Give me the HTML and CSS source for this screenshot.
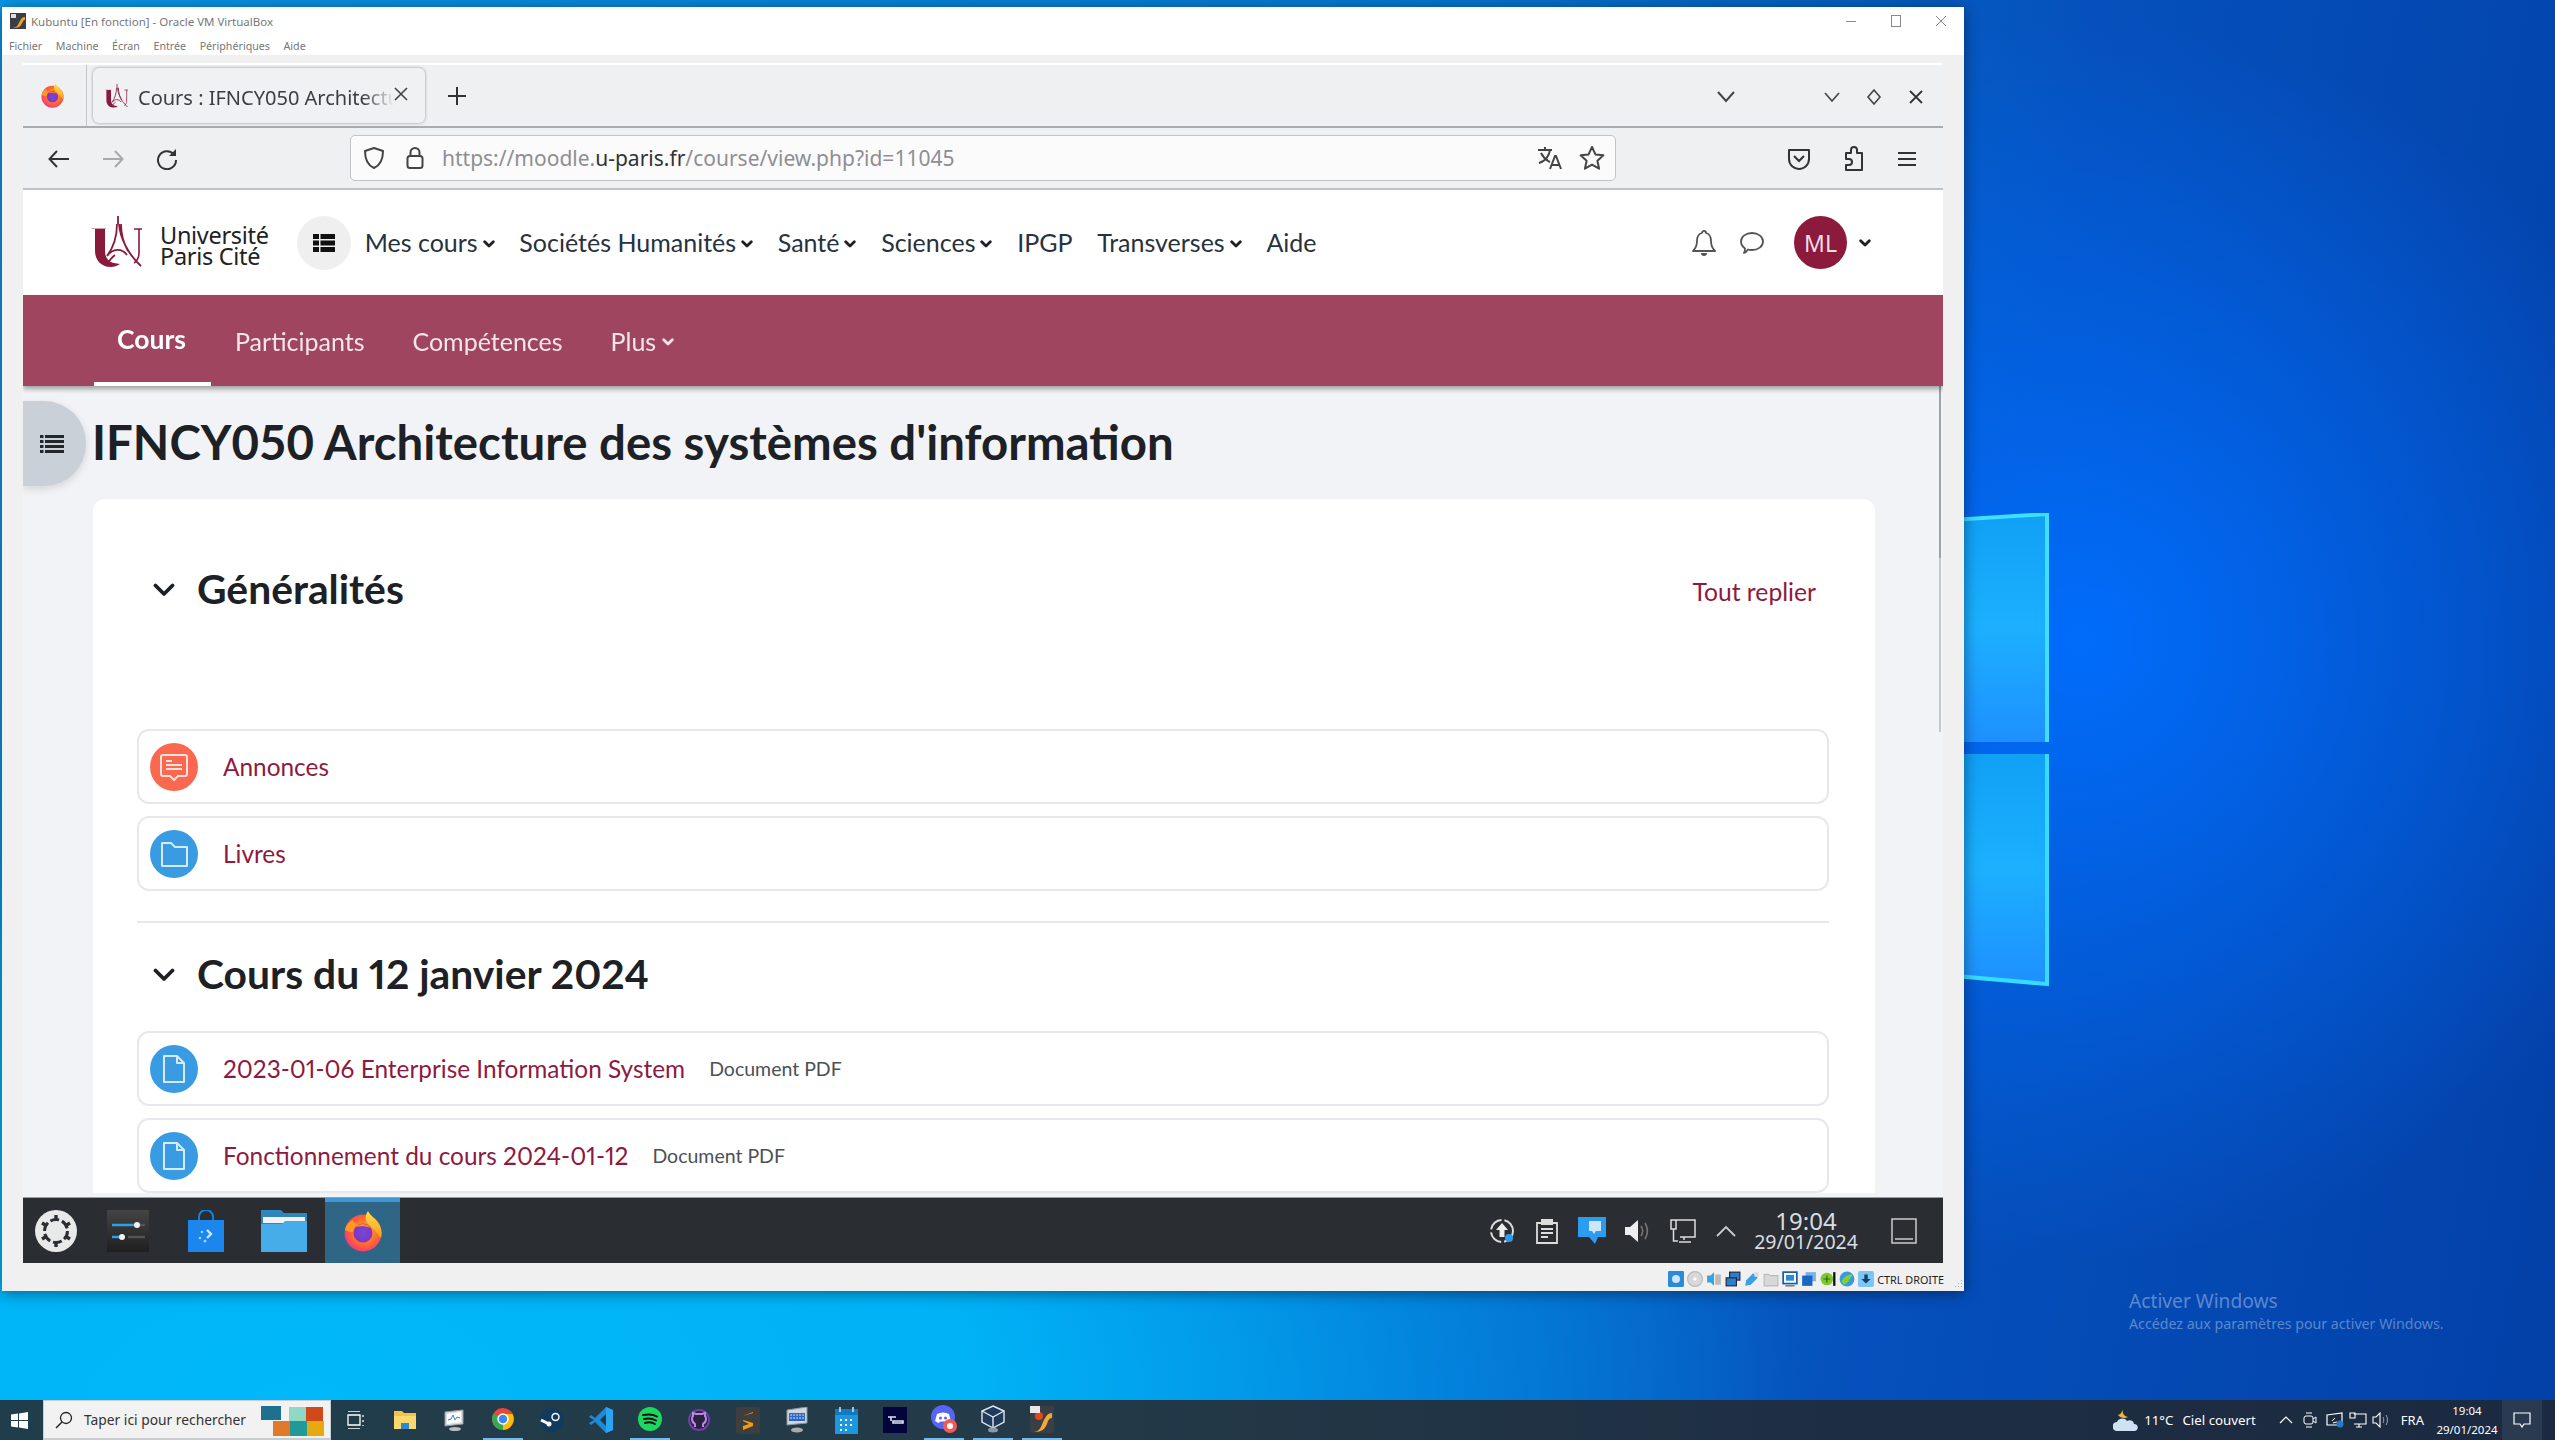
FILE: index.html
```html
<!DOCTYPE html>
<html lang="fr">
<head>
<meta charset="utf-8">
<title>Kubuntu - Oracle VM VirtualBox</title>
<link rel="stylesheet" href="styles.css">
</head>
<body>
<svg class="defs" width="0" height="0">
  <defs>
    <radialGradient id="fxBody" cx="55%" cy="45%" r="60%"><stop offset="0" stop-color="#ffb52e"/><stop offset=".6" stop-color="#ff6a2b"/><stop offset="1" stop-color="#f0318a"/></radialGradient>
    <linearGradient id="fxTop" x1="0" y1="0" x2="0" y2="1"><stop offset="0" stop-color="#ffe23f"/><stop offset="1" stop-color="#ff9a1f"/></linearGradient>
    <radialGradient id="fxCore" cx="50%" cy="50%" r="55%"><stop offset="0" stop-color="#6d4bd8"/><stop offset="1" stop-color="#8a2fc0"/></radialGradient>
    <symbol id="firefox" viewBox="0 0 42 42">
      <circle cx="21" cy="23" r="18.5" fill="url(#fxBody)"/>
      <path d="M26 1c2 5 8 7 11 13 3 5 3 10 2 14-3-3-5-7-8-9-3-3-6-5-7-9-1-3 0-6 2-9z" fill="url(#fxTop)"/>
      <path d="M3 20c1-5 4-8 8-10 0 3 2 4 5 4-3 2-5 5-5 8-3 0-6-1-8-2z" fill="#ff9b24"/>
      <circle cx="21" cy="23" r="9.5" fill="url(#fxCore)"/>
      <path d="M13 17c4-4 12-4 16 1-5-2-11-2-16-1z" fill="#ff8a1f"/>
    </symbol>
    <symbol id="upc" viewBox="0 0 52 52">
      <path d="M0 12.5h14" stroke="#c9a0ae" stroke-width="1" fill="none"/>
      <path d="M3 13h10v22c0 7 4 11 9 12l6 1c-3 2-6 3-9 3C9 51 3 44 3 35z" fill="#8a1a3c"/>
      <path d="M42 13h8M47 13v24c0 4-2 8-5 10" stroke="#8a1a3c" stroke-width="1.6" fill="none"/>
      <path d="M26 0v8M25 8c0 12-4 24-10 32M27 8c1 14 9 30 22 42M15 40c6-8 15-8 20-1M14 50c3-5 6-9 9-11M29 8c0 10 3 20 7 27" stroke="#8a1a3c" stroke-width="1.8" fill="none"/>
    </symbol>
    <symbol id="doc" viewBox="0 0 48 48">
      <circle cx="24" cy="24" r="24" fill="#399be2"/>
      <path d="M14 11h13l7 7v19H14z M27 11v7h7" fill="none" stroke="#d6eafa" stroke-width="2" stroke-linejoin="round"/>
    </symbol>
    <symbol id="caret" viewBox="0 0 12 8"><path d="M1.700 1.700 6 6l4.300-4.300" fill="none" stroke="currentColor" stroke-width="2.800" stroke-linecap="round" stroke-linejoin="round"/></symbol>
  </defs>
</svg>

<div class="desktop">
  <div class="wallpaper-area">
    <svg class="winlogo" viewBox="0 0 600 520" width="600" height="520">
      <defs><linearGradient id="pane" x1="0" y1="0" x2="0" y2="1"><stop offset="0" stop-color="#10a0f5"/><stop offset=".5" stop-color="#1cb0ff"/><stop offset="1" stop-color="#1e90ff"/></linearGradient></defs>
      <path d="M0 41 586 0v229H0z" fill="url(#pane)"/>
      <path d="M0 241h586v230L0 420z" fill="url(#pane)"/>
      <path d="M0 38 586 1v228" fill="none" stroke="#3fe0ff" stroke-width="4"/>
      <path d="M586 241v230L0 420" fill="none" stroke="#35dcff" stroke-width="4"/>
    </svg>

    <div class="activate">
      <div class="activate-title">Activer Windows</div>
      <div class="activate-sub">Accédez aux paramètres pour activer Windows.</div>
    </div>

    <div class="vbox">
      <div class="vb-title">
        <svg class="vb-appicon" viewBox="0 0 16 16"><rect width="16" height="16" fill="#3b3f45"/><path d="M3 15c5-1 5-4 7-7 1-2 2-4 5-4v3c-2 0-2 2-4 5-1 2-3 3-8 3z" fill="#f0a030"/><rect x="1" y="1" width="5" height="4" fill="#ddd"/></svg>
        <span class="vb-name">Kubuntu [En fonction] - Oracle VM VirtualBox</span>
        <div class="vb-controls">
          <svg viewBox="0 0 12 12" width="12" height="12"><path d="M1 6.500h10" stroke="#888" fill="none"/></svg>
          <svg viewBox="0 0 12 12" width="12" height="12"><rect x="1.500" y=".5" width="9" height="11" stroke="#888" fill="none"/></svg>
          <svg viewBox="0 0 12 12" width="12" height="12"><path d="M1 1l10 10M11 1 1 11" stroke="#888" fill="none"/></svg>
        </div>
      </div>
      <div class="vb-menu"><span>Fichier</span><span>Machine</span><span>Écran</span><span>Entrée</span><span>Périphériques</span><span>Aide</span></div>

      <div class="vb-frame">
        <div class="guest">
          <div class="tabbar">
            <div class="fx-menu"><svg width="25" height="25"><use href="#firefox"/></svg></div>
            <div class="tab">
              <svg class="tab-fav" width="24" height="24"><use href="#upc"/></svg>
              <span class="tab-title">Cours : IFNCY050 Architecture des systèmes</span>
              <svg class="tab-x" viewBox="0 0 14 14" width="14" height="14"><path d="M1 1l12 12M13 1 1 13" stroke="#444" stroke-width="1.600" fill="none"/></svg>
            </div>
            <svg class="newtab" viewBox="0 0 18 18" width="18" height="18"><path d="M9 0v18M0 9h18" stroke="#333" stroke-width="2" fill="none"/></svg>
            <div class="tab-tools">
              <svg class="tt-list" viewBox="0 0 18 12" width="18" height="12"><path d="M1 1l8 9 8-9" stroke="#444" stroke-width="2" fill="none"/></svg>
              <svg class="tt-min" viewBox="0 0 16 10" width="16" height="10"><path d="M1 1l7 8 7-8" stroke="#444" stroke-width="1.600" fill="none"/></svg>
              <svg class="tt-max" viewBox="0 0 16 16" width="16" height="16"><path d="M8 1l6 7-6 7-6-7z" stroke="#444" stroke-width="1.600" fill="none"/></svg>
              <svg class="tt-close" viewBox="0 0 14 14" width="14" height="14"><path d="M1 1l12 12M13 1 1 13" stroke="#333" stroke-width="1.800" fill="none"/></svg>
            </div>
          </div>

          <div class="toolbar">
            <svg class="tb-back" viewBox="0 0 22 18" width="22" height="18"><path d="M21 9H2M9 1 1.500 9 9 17" stroke="#333" stroke-width="2" fill="none"/></svg>
            <svg class="tb-fwd" viewBox="0 0 22 18" width="22" height="18"><path d="M1 9h19M13 1l7.500 8-7.500 8" stroke="#aaa" stroke-width="2" fill="none"/></svg>
            <svg class="tb-reload" viewBox="0 0 22 22" width="22" height="22"><path d="M18 6.500A9 9 0 1 0 20 12" stroke="#333" stroke-width="2" fill="none"/><path d="M20 1v7h-7z" fill="#333"/></svg>
            <div class="urlbar">
              <svg class="u-shield" viewBox="0 0 22 24" width="22" height="24"><path d="M11 2l9 3c0 8-2 14-9 17C4 19 2 13 2 5z" stroke="#444" stroke-width="2" fill="none" stroke-linejoin="round"/></svg>
              <svg class="u-lock" viewBox="0 0 18 24" width="18" height="24"><rect x="1.500" y="10" width="15" height="12" rx="2.500" stroke="#444" stroke-width="2" fill="none"/><path d="M4.500 10V6.500a4.500 4.500 0 0 1 9 0V10" stroke="#444" stroke-width="2" fill="none"/></svg>
              <span class="u-text">https://moodle.<b>u-paris.fr</b>/course/view.php?id=11045</span>
              <svg class="u-trans" viewBox="0 0 26 24" width="26" height="24"><path d="M1 4h14M8 1v3M13 4c-1 6-5 11-11 13M4 7c2 4 5 7 9 9" stroke="#444" stroke-width="2" fill="none"/><path d="M13 23l5-13h1l5 13M15 19h8" stroke="#444" stroke-width="2" fill="none"/></svg>
              <svg class="u-star" viewBox="0 0 26 26" width="26" height="26"><path d="M13 2l3.400 7.400 8 .9-6 5.400 1.700 8L13 19.700 5.900 23.700l1.700-8-6-5.400 8-.9z" stroke="#444" stroke-width="2" fill="none" stroke-linejoin="round"/></svg>
            </div>
            <svg class="tb-pocket" viewBox="0 0 24 24" width="24" height="24"><path d="M2 3h20v9c0 6-5 10-10 10S2 18 2 12z" stroke="#333" stroke-width="2" fill="none" stroke-linejoin="round"/><path d="M7 9l5 5 5-5" stroke="#333" stroke-width="2" fill="none"/></svg>
            <svg class="tb-puzzle" viewBox="0 0 22 26" width="22" height="26"><path d="M3 7h5V4a3 3 0 0 1 6 0v3h5v17H3v-5h3a3 3 0 0 0 0-6H3z" stroke="#333" stroke-width="2" fill="none" stroke-linejoin="round"/></svg>
            <svg class="tb-menu" viewBox="0 0 20 16" width="20" height="16"><path d="M1 2h18M1 8h18M1 14h18" stroke="#333" stroke-width="2" fill="none"/></svg>
          </div>

          <header class="site-head">
            <svg class="upc-mark" width="52" height="52"><use href="#upc"/></svg>
            <div class="upc-name"><span>Université</span><span>Paris Cité</span></div>
            <div class="apps-btn"><svg viewBox="0 0 22 18" width="22" height="18"><path d="M0 0h6v5H0zM7.500 0H22v5H7.500zM0 6.500h6v5H0zM7.500 6.500H22v5H7.500zM0 13h6v5H0zM7.500 13H22v5H7.500z" fill="#111"/></svg></div>
            <nav class="site-nav">
              <a class="nav-item">Mes cours <svg width="12" height="8"><use href="#caret"/></svg></a>
              <a class="nav-item">Sociétés Humanités <svg width="12" height="8"><use href="#caret"/></svg></a>
              <a class="nav-item">Santé <svg width="12" height="8"><use href="#caret"/></svg></a>
              <a class="nav-item">Sciences <svg width="12" height="8"><use href="#caret"/></svg></a>
              <a class="nav-item">IPGP</a>
              <a class="nav-item">Transverses <svg width="12" height="8"><use href="#caret"/></svg></a>
              <a class="nav-item">Aide</a>
            </nav>
            <div class="user-tools">
              <svg class="ut-bell" viewBox="0 0 24 26" width="24" height="26"><path d="M12 1c1 0 2 1 2 2 4 1 5 4 5 8 0 5 1 7 4 10H1c3-3 4-5 4-10 0-4 1-7 5-8 0-1 1-2 2-2z" stroke="#555" stroke-width="1.800" fill="none" stroke-linejoin="round"/><path d="M9 23a3 3 0 0 0 6 0z" fill="#555"/></svg>
              <svg class="ut-chat" viewBox="0 0 26 24" width="26" height="24"><path d="M13 2c6 0 11 3.500 11 8.500S19 19 13 19c-2 0-3 0-4-.5-1 1.500-2 3-4 3.500 1-1.500 1-3 1-4.500-2-1.500-4-4-4-7C2 5.500 7 2 13 2z" stroke="#555" stroke-width="1.800" fill="none" stroke-linejoin="round"/></svg>
              <div class="avatar">ML</div>
              <svg class="ut-caret" width="12" height="8"><use href="#caret"/></svg>
            </div>
          </header>

          <div class="sec-nav">
            <a class="sec-item active">Cours</a>
            <a class="sec-item">Participants</a>
            <a class="sec-item">Compétences</a>
            <a class="sec-item">Plus <svg width="12" height="8"><use href="#caret"/></svg></a>
          </div>

          <main class="page">
            <div class="drawer-btn"><svg viewBox="0 0 24 20" width="24" height="20"><path d="M0 1h3.500v3H0zM5 1h19v3H5zM0 6h3.500v3H0zM5 6h19v3H5zM0 11h3.500v3H0zM5 11h19v3H5zM0 16h3.500v3H0zM5 16h19v3H5z" fill="#23272b"/></svg></div>
            <div class="scroll-a"></div>
            <div class="scroll-b"></div>
            <h1 class="course-title">IFNCY050 Architecture des systèmes d'information</h1>
            <section class="card">
              <div class="sec-head first">
                <svg class="sec-caret" viewBox="0 0 22 14" width="22" height="14"><path d="M2.500 2.500 11 11l8.500-8.500" stroke="#1d2125" stroke-width="3.800" fill="none" stroke-linecap="round" stroke-linejoin="round"/></svg>
                <h2>Généralités</h2>
                <a class="collapse-all">Tout replier</a>
              </div>
              <div class="activity">
                <svg class="act-icon" viewBox="0 0 48 48" width="48" height="48"><circle cx="24" cy="24" r="24" fill="#fb6850"/><path d="M13 12h22a2 2 0 0 1 2 2v17a2 2 0 0 1-2 2h-7l-4 4-4-4h-7a2 2 0 0 1-2-2V14a2 2 0 0 1 2-2z" fill="none" stroke="#fde3dc" stroke-width="2"/><path d="M16 18h6M16 22h16M16 26h16" stroke="#fde3dc" stroke-width="2"/></svg>
                <a class="act-link">Annonces</a>
              </div>
              <div class="activity">
                <svg class="act-icon" viewBox="0 0 48 48" width="48" height="48"><circle cx="24" cy="24" r="24" fill="#399be2"/><path d="M12 13h9l4 4h12v19H12z" fill="none" stroke="#d6eafa" stroke-width="2" stroke-linejoin="round"/></svg>
                <a class="act-link">Livres</a>
              </div>
              <hr class="divider">
              <div class="sec-head">
                <svg class="sec-caret" viewBox="0 0 22 14" width="22" height="14"><path d="M2.500 2.500 11 11l8.500-8.500" stroke="#1d2125" stroke-width="3.800" fill="none" stroke-linecap="round" stroke-linejoin="round"/></svg>
                <h2>Cours du 12 janvier 2024</h2>
              </div>
              <div class="activity">
                <svg class="act-icon" width="48" height="48"><use href="#doc"/></svg>
                <a class="act-link">2023-01-06 Enterprise Information System</a>
                <span class="act-type">Document PDF</span>
              </div>
              <div class="activity">
                <svg class="act-icon" width="48" height="48"><use href="#doc"/></svg>
                <a class="act-link">Fonctionnement du cours 2024-01-12</a>
                <span class="act-type">Document PDF</span>
              </div>
            </section>
          </main>

          <div class="dock">
            <div class="dock-slot s-k">
              <svg viewBox="0 0 42 42" width="42" height="42"><circle cx="21" cy="21" r="21" fill="#e9e9e9"/><circle cx="21" cy="21" r="11.500" fill="none" stroke="#2a2e32" stroke-width="3" stroke-dasharray="9 3"/><path d="M21 5v5M21 32v5M7 13l5 3M30 26l5 3M7 29l5-3M30 16l5-3" stroke="#2a2e32" stroke-width="3.400"/></svg>
            </div>
            <div class="dock-slot s-s">
              <svg viewBox="0 0 42 42" width="42" height="42"><defs><linearGradient id="setbg" x1="0" y1="0" x2="0" y2="1"><stop offset="0" stop-color="#444"/><stop offset="1" stop-color="#1f1f1f"/></linearGradient></defs><rect width="42" height="42" fill="url(#setbg)"/><path d="M5 15h24" stroke="#2aa1ef" stroke-width="2.500"/><path d="M30 15h8M21 27h17" stroke="#555" stroke-width="2.500"/><path d="M5 27h10" stroke="#2aa1ef" stroke-width="2.500"/><circle cx="30" cy="15" r="3" fill="#f2f2f2"/><circle cx="15" cy="27" r="3" fill="#f2f2f2"/></svg>
            </div>
            <div class="dock-slot s-b">
              <svg viewBox="0 0 36 42" width="36" height="42"><path d="M11 11V7a7 7 0 0 1 14 0v4" fill="none" stroke="#1c7fc9" stroke-width="2"/><path d="M0 10h36v32H0z" fill="#1a86ee"/><path d="M19 20l4 4-4 4" stroke="#cfe8ff" stroke-width="2.400" fill="none"/><circle cx="14" cy="22" r="1.300" fill="#9ed0fa"/><circle cx="12" cy="28" r="1.300" fill="#9ed0fa"/><circle cx="17" cy="31" r="1.500" fill="#9ed0fa"/></svg>
            </div>
            <div class="dock-slot s-f">
              <svg viewBox="0 0 46 42" width="46" height="42"><path d="M0 0h20l3 3h23v39H0z" fill="#2f86bd"/><rect x="2" y="7" width="42" height="6" fill="#f3f3f3"/><path d="M0 14h21l3-3h22v31H0z" fill="#46ade8"/></svg>
            </div>
            <div class="dock-slot s-fx"><svg width="42" height="44"><use href="#firefox"/></svg></div>
            <div class="dock-tray">
              <svg class="dt dt1" viewBox="0 0 26 26" width="26" height="26"><circle cx="13" cy="13" r="11" fill="none" stroke="#ddd" stroke-width="2" stroke-dasharray="15 3"/><path d="M13 5l6 7h-3.500v7h-5v-7H7z" fill="#eee"/><circle cx="20" cy="20" r="4" fill="#2b9cf0"/></svg>
              <svg class="dt dt2" viewBox="0 0 22 26" width="22" height="26"><path d="M1 5h20v20H1z" fill="none" stroke="#ddd" stroke-width="1.800"/><rect x="5" y="1" width="12" height="6" fill="#ddd"/><path d="M5 11h12M5 15h12M5 19h7" stroke="#ddd" stroke-width="1.800"/></svg>
              <svg class="dt dt3" viewBox="0 0 28 28" width="28" height="28"><path d="M0 0h28v20h-8l-3 7-6-7H0z" fill="#2b9cf0"/><path d="M11 4h12v10h-5l-2 3-2-3h-3z" fill="#cfe6f8"/></svg>
              <svg class="dt dt4" viewBox="0 0 26 26" width="26" height="26"><path d="M1 9h5l8-7v22l-8-7H1z" fill="#eee"/><path d="M17 8c2 3 2 7 0 10M21 5c3 5 3 11 0 16" stroke="#777" stroke-width="1.500" fill="none"/></svg>
              <svg class="dt dt5" viewBox="0 0 26 26" width="26" height="26"><path d="M6 2h19v17H10M14 19v3M9 24h12M1 2h5v9H1zM3.500 11v12H8" fill="none" stroke="#ddd" stroke-width="1.500"/></svg>
              <svg class="dt dt6" viewBox="0 0 20 12" width="20" height="12"><path d="M1 11l9-9 9 9" fill="none" stroke="#ccc" stroke-width="1.800"/></svg>
              <div class="dock-clock"><div class="dc-t">19:04</div><div class="dc-d">29/01/2024</div></div>
              <svg class="dt dt7" viewBox="0 0 26 26" width="26" height="26"><path d="M1 1h24v24H1zM4 21h18" fill="none" stroke="#ccc" stroke-width="1.500"/></svg>
            </div>
          </div>
        </div>
      </div>

      <div class="vb-status">
        <svg viewBox="0 0 14 14"><rect width="14" height="14" rx="1" fill="#2a8cd8"/><circle cx="7" cy="7" r="3.500" fill="#cfe6f8"/></svg>
        <svg viewBox="0 0 14 14"><circle cx="7" cy="7" r="6.500" fill="#d8d8d8" stroke="#bbb"/><circle cx="7" cy="7" r="1.500" fill="#fff"/></svg>
        <svg viewBox="0 0 14 14"><path d="M1 4h3l3-3v12l-3-3H1z" fill="#3aa0e0"/><rect x="8" y="3" width="5" height="9" fill="#bbb"/></svg>
        <svg viewBox="0 0 14 14"><rect x="4" y="1" width="9" height="7" fill="#2a7fc8" stroke="#224"/><rect x="1" y="6" width="9" height="7" fill="#2a7fc8" stroke="#224"/></svg>
        <svg viewBox="0 0 14 14"><path d="M1 13l1-5 6-6 4 4-6 6z" fill="#3aa0e0"/><rect x="9" y="1" width="4" height="4" fill="#ddd"/></svg>
        <svg viewBox="0 0 14 14"><path d="M1 3h4l1 1h7v9H1z" fill="#d8d8d8" stroke="#bbb"/></svg>
        <svg viewBox="0 0 14 14"><rect x="1" y="1" width="12" height="10" fill="#fff" stroke="#1a5fa8" stroke-width="1.500"/><rect x="3.500" y="3.500" width="7" height="5" fill="#2a8cd8"/><path d="M3 13h8" stroke="#555"/></svg>
        <svg viewBox="0 0 14 14"><rect x="4" y="1" width="9" height="8" fill="#7db0e8"/><rect x="1" y="4" width="9" height="9" fill="#1a66c4"/></svg>
        <svg viewBox="0 0 14 14"><circle cx="6" cy="7" r="5.500" fill="#7fc832"/><path d="M3 7h6M6 4v6" stroke="#2c6a10"/><rect x="11.500" y="1" width="2" height="12" fill="#111"/></svg>
        <svg viewBox="0 0 14 14"><circle cx="7" cy="7" r="6.500" fill="#3a9ae0"/><path d="M2 9c3-5 6-6 10-6-2 3-4 8-8 9z" fill="#7fcf3a"/></svg>
        <svg viewBox="0 0 14 14"><rect width="14" height="14" rx="1.500" fill="#7cc6f5"/><path d="M5.500 3h3v4h2.500L7 11 3 7h2.500z" fill="#10406e"/></svg>
        <span class="vb-ctrl">CTRL DROITE</span>
        <svg class="vb-grip" viewBox="0 0 10 10"><path d="M8 2h1v1H8zM5 5h1v1H5zM8 5h1v1H8zM2 8h1v1H2zM5 8h1v1H5zM8 8h1v1H8z" fill="#aaa"/></svg>
      </div>
    </div>
  </div>

  <div class="taskbar">
    <div class="start"><svg viewBox="0 0 17 17" width="17" height="17"><path d="M0 2.500 7 1.500v6.500H0zM8 1.400 17 0v8H8zM0 9h7v6.500l-7-1zM8 9h9v8l-9-1.400z" fill="#fff"/></svg></div>
    <div class="search">
      <svg class="s-glass" viewBox="0 0 18 18" width="18" height="18"><circle cx="11" cy="7" r="5.500" fill="none" stroke="#222" stroke-width="1.300"/><path d="M7 11l-6 6" stroke="#222" stroke-width="1.400"/></svg>
      <span>Taper ici pour rechercher</span>
      <div class="puzzle"><i class="p1"></i><i class="p2"></i><i class="p3"></i><i class="p4"></i><i class="p5"></i><i class="p6"></i></div>
    </div>
    <div class="tb-apps">
      <div class="tb-slot"><svg viewBox="0 0 18 18" width="18" height="18"><path d="M1 0h12M1 18h12M1 4h12v10H1zM16 4v2M16 9v2M16 14v1" stroke="#fff" stroke-width="1.300" fill="none"/></svg></div>
      <div class="tb-slot"><svg viewBox="0 0 22 20" width="22" height="20"><path d="M0 1h8l2 2h12v16H0z" fill="#f3c44a"/><path d="M0 6h22v13H0z" fill="#fada6e"/><path d="M7 13h8v6H7z" fill="#2f87d0"/></svg></div>
      <div class="tb-slot"><svg viewBox="0 0 22 22" width="22" height="22"><path d="M2 3l18-2v14L2 17z" fill="#d8dde2" stroke="#999"/><path d="M4 5l14-2v10L4 15z" fill="#fff"/><path d="M5 11l3-1 2-4 2 5 2-3 3 1" stroke="#2f87d0" fill="none"/><ellipse cx="12" cy="20" rx="6" ry="2" fill="#bbb"/></svg></div>
      <div class="tb-slot on"><svg viewBox="0 0 22 22" width="22" height="22"><circle cx="11" cy="11" r="11" fill="#e8453c"/><path d="M11 11 1.500 5.500A11 11 0 0 0 11 22z" fill="#34a853"/><path d="M11 6h9.500A11 11 0 0 1 11 22z" fill="#fbbc05"/><circle cx="11" cy="11" r="5" fill="#4285f4" stroke="#fff" stroke-width="1.500"/></svg></div>
      <div class="tb-slot"><svg viewBox="0 0 24 24" width="24" height="24"><circle cx="12" cy="12" r="12" fill="#123a5c"/><circle cx="15.500" cy="9" r="3.500" fill="none" stroke="#fff" stroke-width="1.400"/><path d="M1 12l8 4" stroke="#fff" stroke-width="3"/><circle cx="9" cy="16" r="2.500" fill="#fff"/></svg></div>
      <div class="tb-slot"><svg viewBox="0 0 24 26" width="24" height="26"><path d="M17 0l7 3v20l-7 3L6 15l-4 3-2-2 5-3-5-3 2-2 4 3z" fill="#1d8ad6"/><path d="M17 0l7 3v20l-7 3z" fill="#2aa5f0"/><path d="M17 7l-6 6 6 6z" fill="#243744"/></svg></div>
      <div class="tb-slot on"><svg viewBox="0 0 24 24" width="24" height="24"><circle cx="12" cy="12" r="12" fill="#1ed760"/><path d="M5 8c5-1 10-1 14 1.500M6 12c4-1 8-1 12 1.500M7 16c3-1 7-1 10 1" stroke="#111" stroke-width="2" fill="none" stroke-linecap="round"/></svg></div>
      <div class="tb-slot"><svg viewBox="0 0 22 24" width="22" height="24"><circle cx="11" cy="12" r="10" fill="#2b2140" stroke="#6f3fa5" stroke-width="2"/><path d="M7 19v-3c-2-1-3-3-3-5 0-1 0-2 1-3V5l3 1h6l3-1v3c1 1 1 2 1 3 0 2-1 4-3 5v3" fill="none" stroke="#b48ae0" stroke-width="2"/></svg></div>
      <div class="tb-slot"><svg viewBox="0 0 24 27" width="24" height="27"><rect width="24" height="27" rx="2" fill="#3e3e3e"/><path d="M17 5 7 9v4l10 3v3L7 23v-4l6-2-6-3V9l10-3z" fill="#f59b10"/></svg></div>
      <div class="tb-slot"><svg viewBox="0 0 24 26" width="24" height="26"><path d="M2 3 22 0v16L2 18z" fill="#d0d7de" stroke="#8a949e"/><path d="M4 6h16v8H4z" fill="#2d66c4"/><path d="M5 8h14M5 11h14" stroke="#cfe0fa" stroke-dasharray="2 1"/><ellipse cx="12" cy="23" rx="6" ry="2.500" fill="#aaa"/></svg></div>
      <div class="tb-slot"><svg viewBox="0 0 23 27" width="23" height="27"><rect y="2" width="23" height="25" fill="#1b98e0"/><rect y="2" width="23" height="6" fill="#1478c0"/><path d="M5 0v5M18 0v5" stroke="#ccecff" stroke-width="1.500"/><path d="M5 12h2v2H5zM10 12h2v2h-2zM15 12h2v2h-2zM5 17h2v2H5zM10 17h2v2h-2zM15 17h2v2h-2zM5 22h2v2H5zM10 22h2v2h-2z" fill="#fff"/></svg></div>
      <div class="tb-slot"><svg viewBox="0 0 24 26" width="24" height="26"><rect width="24" height="26" fill="#04043c"/><path d="M5 10h8M8 10v4M10 14h10v2H10z" stroke="#dfe4f0" stroke-width="1.600" fill="none"/></svg></div>
      <div class="tb-slot on"><svg viewBox="0 0 26 28" width="26" height="28"><circle cx="12" cy="12" r="12" fill="#5865f2"/><path d="M6 9c4-2 8-2 12 0l2 7c-2 1-3 2-4 2l-1-1.500h-6L8 18c-1 0-2-1-4-2z" fill="#fff"/><circle cx="9.500" cy="13" r="1.500" fill="#5865f2"/><circle cx="14.500" cy="13" r="1.500" fill="#5865f2"/><circle cx="19" cy="21" r="7" fill="#ef5a5a"/><circle cx="19" cy="21" r="3" fill="#fff"/></svg></div>
      <div class="tb-slot on"><svg viewBox="0 0 24 28" width="24" height="28"><path d="M12 1l11 5v11l-11 6-11-6V6z" fill="#1f3a5a" stroke="#dfe9f2" stroke-width="1.400"/><path d="M1 6l11 6 11-6M12 12v11" stroke="#dfe9f2" stroke-width="1.400" fill="none"/><ellipse cx="12" cy="25" rx="5" ry="2.500" fill="#8a9aa8"/></svg></div>
      <div class="tb-slot on"><svg viewBox="0 0 24 27" width="24" height="27"><rect width="24" height="27" rx="2" fill="#3a3f46"/><path d="M4 26c6-1 7-5 9-10 2-4 4-9 9-9v5c-3 0-4 3-5 6-2 5-5 8-13 8z" fill="#f1a93a"/><circle cx="9" cy="10" r="4" fill="#e04a1a"/><rect x="0" y="0" width="10" height="7" fill="#e8e8e8"/></svg></div>
    </div>
    <div class="tb-tray">
      <svg class="w-icon" viewBox="0 0 26 24" width="26" height="24"><path d="M10 1c-1 3 0 7 5 8-3 2-8 1-10-2 2 0 4-3 5-6z" fill="#f5b52e"/><path d="M4 23a4.500 4.500 0 0 1 0-9c1-4 8-5 10-1 3-2 7 0 7 3 5 0 5 7 0 7z" fill="#cfe2f3"/></svg>
      <span class="w-temp">11°C</span>
      <span class="w-text">Ciel couvert</span>
      <svg class="tr tr1" viewBox="0 0 14 8" width="14" height="8"><path d="M1 7l6-6 6 6" fill="none" stroke="#fff" stroke-width="1.200"/></svg>
      <svg class="tr tr2" viewBox="0 0 14 18" width="14" height="18"><rect x="1" y="5" width="9" height="8" rx="2" fill="none" stroke="#fff"/><path d="M10 8l3-2v6l-3-2M3 2h6M3 16h6" stroke="#fff" fill="none"/></svg>
      <svg class="tr tr3" viewBox="0 0 18 16" width="18" height="16"><path d="M1 3l15-2v12H1z" fill="none" stroke="#fff" stroke-width="1.200"/><path d="M6 9l3-3M7 11l4-1" stroke="#fff"/><circle cx="14" cy="12" r="3.500" fill="#2a78c8"/></svg>
      <svg class="tr tr4" viewBox="0 0 18 16" width="18" height="16"><path d="M5 2h12v10H5M10 12v3M7 15h6M1 1h5v5H1z" fill="none" stroke="#fff" stroke-width="1.100"/></svg>
      <svg class="tr tr5" viewBox="0 0 18 16" width="18" height="16"><path d="M1 5h3l4-4v14l-4-4H1z" fill="none" stroke="#fff" stroke-width="1.100"/><path d="M11 5c1 2 1 4 0 6M14 3c2 3 2 7 0 10" stroke="#9aa6b2" fill="none"/></svg>
      <span class="lang">FRA</span>
      <div class="tb-clock"><div>19:04</div><div>29/01/2024</div></div>
      <div class="notif"><svg viewBox="0 0 18 16" width="18" height="16"><path d="M1 1h16v11h-6l-2 3-2-3H1z" fill="none" stroke="#fff" stroke-width="1.200"/></svg></div>
    </div>
  </div>
</div>
</body>
</html>
```
FILE: styles.css
```css
* { box-sizing: border-box; }
html, body { margin: 0; padding: 0; }
body { width: 2555px; height: 1440px; overflow: hidden; font-family: "Noto Sans", "Open Sans", sans-serif; }
.defs { position: absolute; }

.desktop { width: 2555px; height: 1440px; display: flex; flex-direction: column;
  background:
    radial-gradient(ellipse 620px 620px at 2080px 640px, rgba(0,110,255,.95), rgba(0,100,230,0) 100%),
    radial-gradient(ellipse 1500px 760px at 300px 1400px, #00b8fa 0%, #00b2f6 45%, rgba(0,150,235,.6) 75%, rgba(0,120,220,0) 100%),
    linear-gradient(100deg, #0a96e6 0%, #0678d0 50%, #0550bc 75%, #0340a8 100%); }
.wallpaper-area { flex: 1; position: relative; overflow: hidden; }
.winlogo { position: absolute; left: 1461px; top: 513px; }

.activate { position: absolute; left: 2129px; top: 1287px; color: rgba(255,255,255,.36); }
.activate-title { font-size: 19.200px; line-height: 27px; }
.activate-sub { font-size: 14.200px; line-height: 20px; }

.vbox { position: absolute; left: 2px; top: 7px; width: 1962px; height: 1284px; background: #f0f0f0;
  display: flex; flex-direction: column; box-shadow: 0 2px 14px rgba(0,0,0,.45); }
.vb-title { height: 29px; background: #fff; display: flex; align-items: flex-start; padding: 6px 0 0 8px; }
.vb-appicon { width: 16px; height: 16px; flex: none; }
.vb-name { margin-left: 5px; font-size: 11.500px; line-height: 18px; color: #777; }
.vb-controls { margin-left: auto; display: flex; gap: 33px; padding: 2px 17px 0 0; }
.vb-menu { height: 19px; background: #fff; display: flex; gap: 13.500px; padding: 1px 0 0 7px; font-size: 10.700px; line-height: 19px; color: #777; }
.vb-frame { flex: 1; min-height: 0; padding: 8px 21px 0 21px; display: flex; }

.guest { width: 1920px; display: flex; flex-direction: column; overflow: hidden; filter: blur(.55px); }

.tabbar { height: 65px; background: #eff0f2; border-top: 2px solid #fff; border-bottom: 2px solid #a9abae; display: flex; position: relative; flex: none; }
.fx-menu { width: 64px; border-right: 1px solid #c4c6c9; display: flex; align-items: center; justify-content: center; padding-right: 4px; }
.tab { width: 332px; height: 55px; margin: 3px 0 0 6px; background: #f0f1f3; border-radius: 6px; box-shadow: 0 0 3px rgba(0,0,0,.4); display: flex; align-items: center; padding: 3px 0 0 12px; }
.tab-fav { flex: none; margin-top: -3px; }
.tab-title { margin-left: 9px; width: 256px; white-space: nowrap; overflow: hidden; font-size: 20px; color: #3a3d42; -webkit-mask-image: linear-gradient(90deg, #000 88%, transparent 100%); mask-image: linear-gradient(90deg, #000 88%, transparent 100%); }
.tab-x { flex: none; margin-left: 0; margin-top: -6px; }
.newtab { margin: 22px 0 0 23px; }
.tab-tools { margin-left: auto; display: flex; align-items: center; height: 63px; padding-right: 20px; }
.tt-min { margin-left: 89px; }
.tt-max { margin-left: 26px; }
.tt-close { margin-left: 27px; }

.toolbar { height: 62px; background: #eff0f2; border-bottom: 2px solid #bfc1c4; display: flex; align-items: center; padding: 2px 0 0 25px; flex: none; }
.tb-fwd { margin-left: 32px; }
.tb-reload { margin-left: 32px; }
.urlbar { width: 1266px; height: 46px; margin-left: 172px; background: #fbfbfb; border: 1.500px solid #c2c4c7; border-radius: 5px; display: flex; align-items: center; padding-left: 12px; margin-top: -2px; }
.u-lock { margin-left: 21px; }
.u-text { margin-left: 18px; font-size: 21px; color: #8e8e93; white-space: nowrap; }
.u-text b { font-weight: 400; color: #2f3135; }
.u-trans { margin-left: auto; }
.u-star { margin: 0 10px 0 16px; }
.tb-pocket { margin-left: 171px; }
.tb-puzzle { margin-left: 32px; }
.tb-menu { margin-left: 32px; }

.site-head { height: 105px; background: #fff; display: flex; align-items: center; padding-left: 69px; position: relative; flex: none; font-family: Lato, "Noto Sans", sans-serif; }
.upc-mark { flex: none; margin-top: -2px; }
.upc-name { margin: 6px 0 0 16px; display: flex; flex-direction: column; font-family: "Noto Sans", sans-serif; font-size: 23.500px; line-height: 21px; color: #222; letter-spacing: -.3px; }
.apps-btn { width: 54px; height: 54px; margin-left: 28px; border-radius: 50%; background: #efefef; display: flex; align-items: center; justify-content: center; flex: none; }
.site-nav { margin: -1px 0 0 14px; display: flex; gap: 24.700px; font-size: 25px; color: #27323d; white-space: nowrap; }
.nav-item { display: inline-flex; align-items: center; gap: 5px; }
.nav-item svg { margin-top: 3px; color: #1d2125; }
.user-tools { margin-left: auto; padding-right: 72px; display: flex; align-items: center; }
.ut-chat { margin-left: 23px; }
.avatar { width: 53px; height: 53px; margin-left: 29px; border-radius: 50%; background: #8c1a3d; color: #f0dde3; font-size: 23px; display: flex; align-items: center; justify-content: center; font-family: "Noto Sans", sans-serif; }
.ut-caret { margin-left: 12px; color: #1d2125; }

.sec-nav { height: 91px; background: #9f4560; display: flex; padding-left: 71px; box-shadow: 0 3px 5px rgba(0,0,0,.35); position: relative; z-index: 2; flex: none; font-family: Lato, "Noto Sans", sans-serif; }
.sec-item { height: 91px; padding: 0 23px; display: flex; align-items: center; gap: 6px; font-size: 25px; color: #f3e6ea; white-space: nowrap; }
.sec-item svg { margin-top: 3px; color: #f3e6ea; }
.sec-item.active { width: 117px; font-size: 26.500px; font-weight: 700; color: #fff; border-bottom: 4px solid #fff; }
.sec-item + .sec-item { padding: 0 24px; }

.page { flex: 1; min-height: 0; background: #f1f3f6; position: relative; overflow: hidden; padding-left: 70px; font-family: Lato, "Noto Sans", sans-serif; }
.drawer-btn { position: absolute; left: 0; top: 15px; width: 63px; height: 85px; background: #c9d0d7; border-radius: 0 42px 42px 0; box-shadow: 0 3px 8px rgba(0,0,0,.12); display: flex; align-items: center; justify-content: center; padding-right: 6px; }
.scroll-a { position: absolute; right: 2px; top: 0; width: 2px; height: 172px; background: #9ba2aa; }
.scroll-b { position: absolute; right: 2px; top: 172px; width: 2px; height: 174px; background: #c5c9ce; }
.course-title { margin: 0 0 0 -1px; height: 113px; padding-bottom: 3px; display: flex; align-items: center; font-size: 47.400px; font-weight: 700; color: #1d2125; white-space: nowrap; }
.card { width: 1782px; background: #fff; border-radius: 12px 12px 0 0; padding: 60px 46px 0 44px; }
.sec-head { height: 60px; display: flex; align-items: center; position: relative; padding-left: 61px; }
.sec-head.first { margin-bottom: 110px; }
.sec-head:not(.first) { margin: 21px 0 27px; }
.sec-caret { position: absolute; left: 16px; top: 24px; }
.sec-head h2 { margin: -2px 0 0 -1px; font-size: 40.800px; font-weight: 700; color: #1d2125; font-variant-numeric: proportional-nums; }
.collapse-all { margin-left: auto; margin-right: 13px; margin-top: 4px; font-size: 24.700px; color: #8d1a3f; }
.activity { height: 75px; margin-bottom: 12px; background: #fff; border: 2px solid #e6e8eb; border-radius: 12px; display: flex; align-items: center; padding-left: 11px; }
.act-icon { flex: none; }
.act-link { margin-left: 25px; font-size: 24.400px; color: #8d1a3f; white-space: nowrap; font-variant-numeric: proportional-nums; }
.act-type { margin-left: 24px; font-size: 19.500px; color: #4b5157; white-space: nowrap; }
.divider { margin: 30px 0 0; border: 0; border-top: 2px solid #e6e8eb; }

.dock { height: 66px; background: #2a2e32; display: flex; align-items: center; flex: none; position: relative; z-index: 3; border-top: 1px solid #9a9ea2; }
.dock-slot { display: flex; align-items: center; justify-content: center; flex: none; height: 66px; }
.s-k { width: 66px; }
.s-s { width: 42px; margin-left: 18px; }
.s-b { width: 36px; margin-left: 39px; }
.s-f { width: 46px; margin-left: 37px; }
.s-fx { width: 75px; margin-left: 18px; background: #2f6585; border-top: 4px solid #3f98d3; padding-bottom: 3px; }
.dock-tray { margin-left: auto; display: flex; align-items: center; padding-right: 26px; }
.dt1 { margin-right: 1px; }
.dt2 { margin-left: 20px; } .dt3 { margin-left: 20px; } .dt4 { margin-left: 18px; } .dt5 { margin-left: 20px; } .dt6 { margin-left: 20px; } .dt7 { margin-left: 33px; }
.dock-clock { margin-left: 18px; text-align: center; color: #d7dde2; width: 104px; }
.dc-t { font-size: 24px; line-height: 22px; }
.dc-d { font-size: 19.500px; line-height: 20px; }

.vb-status { height: 28px; display: flex; align-items: center; justify-content: flex-end; gap: 3px; flex: none; padding: 4px 1px 0 0; }
.vb-status svg { width: 16px; height: 16px; flex: none; }
.vb-ctrl { font-size: 10.800px; color: #222; white-space: nowrap; }
.vb-status .vb-grip { width: 10px; height: 10px; margin: 8px 0 0 6px; }

.taskbar { height: 40px; flex: none; display: flex; align-items: center; background: linear-gradient(90deg, #1f3d4b 0%, #243a48 40%, #1d2d42 75%, #1b2a40 100%); color: #fff; }
.start { width: 43px; display: flex; justify-content: center; padding-right: 5px; }
.search { width: 288px; height: 40px; background: #f2f2f2; border: 1px solid #c9cdd0; border-bottom-width: 2px; display: flex; align-items: center; padding-left: 11px; color: #333; font-size: 13.800px; position: relative; }
.search span { margin-left: 11px; }
.puzzle { position: absolute; left: 217px; top: 5px; width: 64px; height: 30px; }
.puzzle i { position: absolute; display: block; }
.p1 { left: 0; top: 0; width: 20px; height: 14px; background: #1f6f8f; }
.p2 { left: 28px; top: 1px; width: 17px; height: 15px; background: #8fd8c4; }
.p3 { left: 45px; top: 1px; width: 17px; height: 15px; background: #d0491a; }
.p4 { left: 12px; top: 15px; width: 17px; height: 15px; background: #e07a2a; }
.p5 { left: 29px; top: 15px; width: 17px; height: 15px; background: #1f9a96; }
.p6 { left: 46px; top: 15px; width: 17px; height: 15px; background: #e8a80f; }
.tb-apps { display: flex; gap: 9px; padding-left: 5px; }
.tb-slot { width: 40px; height: 40px; display: flex; align-items: center; justify-content: center; flex: none; }
.tb-slot.on { border-bottom: 2px solid #76b9ed; }
.tb-tray { margin-left: auto; display: flex; align-items: center; height: 40px; font-size: 13.300px; }
.w-temp { margin-left: 5px; }
.w-text { margin-left: 9px; }
.tr1 { margin-left: 23px; } .tr2 { margin-left: 10px; } .tr3 { margin-left: 9px; } .tr4 { margin-left: 5px; } .tr5 { margin-left: 5px; }
.lang { margin-left: 11px; font-size: 13px; }
.tb-clock { margin-left: 14px; width: 58px; text-align: center; font-size: 11.500px; line-height: 19px; white-space: nowrap; display: flex; flex-direction: column; align-items: center; }
.notif { width: 40px; height: 40px; margin-left: 6px; margin-right: 13px; background: #2a3a50; display: flex; align-items: center; justify-content: center; }
```
